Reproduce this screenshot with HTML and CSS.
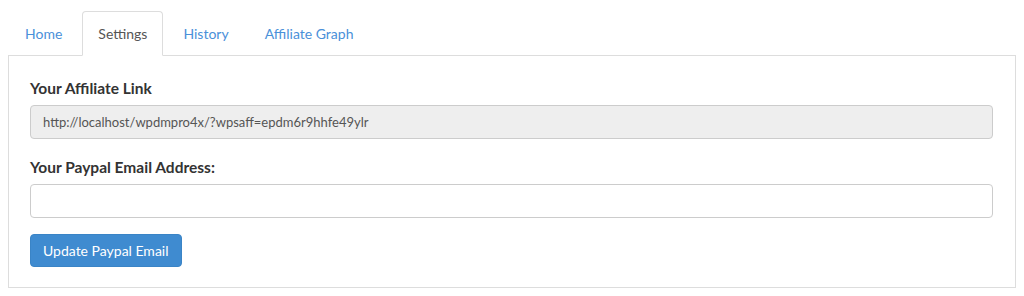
FILE: index.html
```html
<!DOCTYPE html>
<html>
<head>
<meta charset="utf-8">
<link rel="stylesheet" href="styles.css">
</head>
<body>
<div class="wrap">
  <ul class="tabs">
    <li class="tab"><a href="#">Home</a></li>
    <li class="tab active"><a href="#">Settings</a></li>
    <li class="tab"><a href="#">History</a></li>
    <li class="tab"><a href="#">Affiliate Graph</a></li>
  </ul>
  <div class="panel">
    <div class="group">
      <label class="label">Your Affiliate Link</label>
      <input class="field readonly" type="text" readonly value="http://localhost/wpdmpro4x/?wpsaff=epdm6r9hhfe49ylr">
    </div>
    <div class="group">
      <label class="label">Your Paypal Email Address:</label>
      <input class="field" type="text" value="">
    </div>
    <div class="actions">
      <button class="btn" type="button">Update Paypal Email</button>
    </div>
  </div>
</div>
</body>
</html>
```
FILE: styles.css
```css
* { box-sizing: border-box; }
html, body { background: #fff; }
body {
  margin: 0;
  padding: 11px 8px 0 8px;
  font-family: "Lato", "Liberation Sans", sans-serif;
  color: #333;
}
.tabs {
  list-style: none;
  margin: 0;
  padding: 0 0 0 1px;
  display: flex;
  border-bottom: 1px solid #ddd;
}
.tab {
  margin-right: 4px;
  margin-bottom: -1px;
}
.tab a {
  display: block;
  padding: 10px 15px;
  font-size: 14px;
  line-height: 23px;
  color: #4a90d9;
  text-decoration: none;
  border: 1px solid transparent;
  border-radius: 4px 4px 0 0;
}
.tab.active a {
  color: #555;
  background: #fff;
  border-color: #ddd #ddd transparent #ddd;
}
.panel {
  border: 1px solid #ddd;
  border-top: none;
  padding: 21px 22px 20px 21px;
  display: flex;
  flex-direction: column;
  gap: 17px;
}
.group {
  display: flex;
  flex-direction: column;
  gap: 6px;
}
.label {
  font-weight: 700;
  font-size: 15.5px;
  line-height: 22px;
  color: #333;
}
.field {
  display: block;
  width: 100%;
  height: 34px;
  padding: 6px 12px;
  font-family: inherit;
  font-size: 13px;
  color: #555;
  border: 1px solid #ccc;
  border-radius: 4px;
  background: #fff;
  outline: none;
}
.field.readonly { background: #eee; }
.actions { display: flex; margin-top: -1px; }
.btn {
  height: 33px;
  padding: 6px 12px;
  font-family: inherit;
  font-size: 14px;
  color: #fff;
  background: #3f8bd0;
  border: 1px solid #3a84c6;
  border-radius: 4px;
}
```
